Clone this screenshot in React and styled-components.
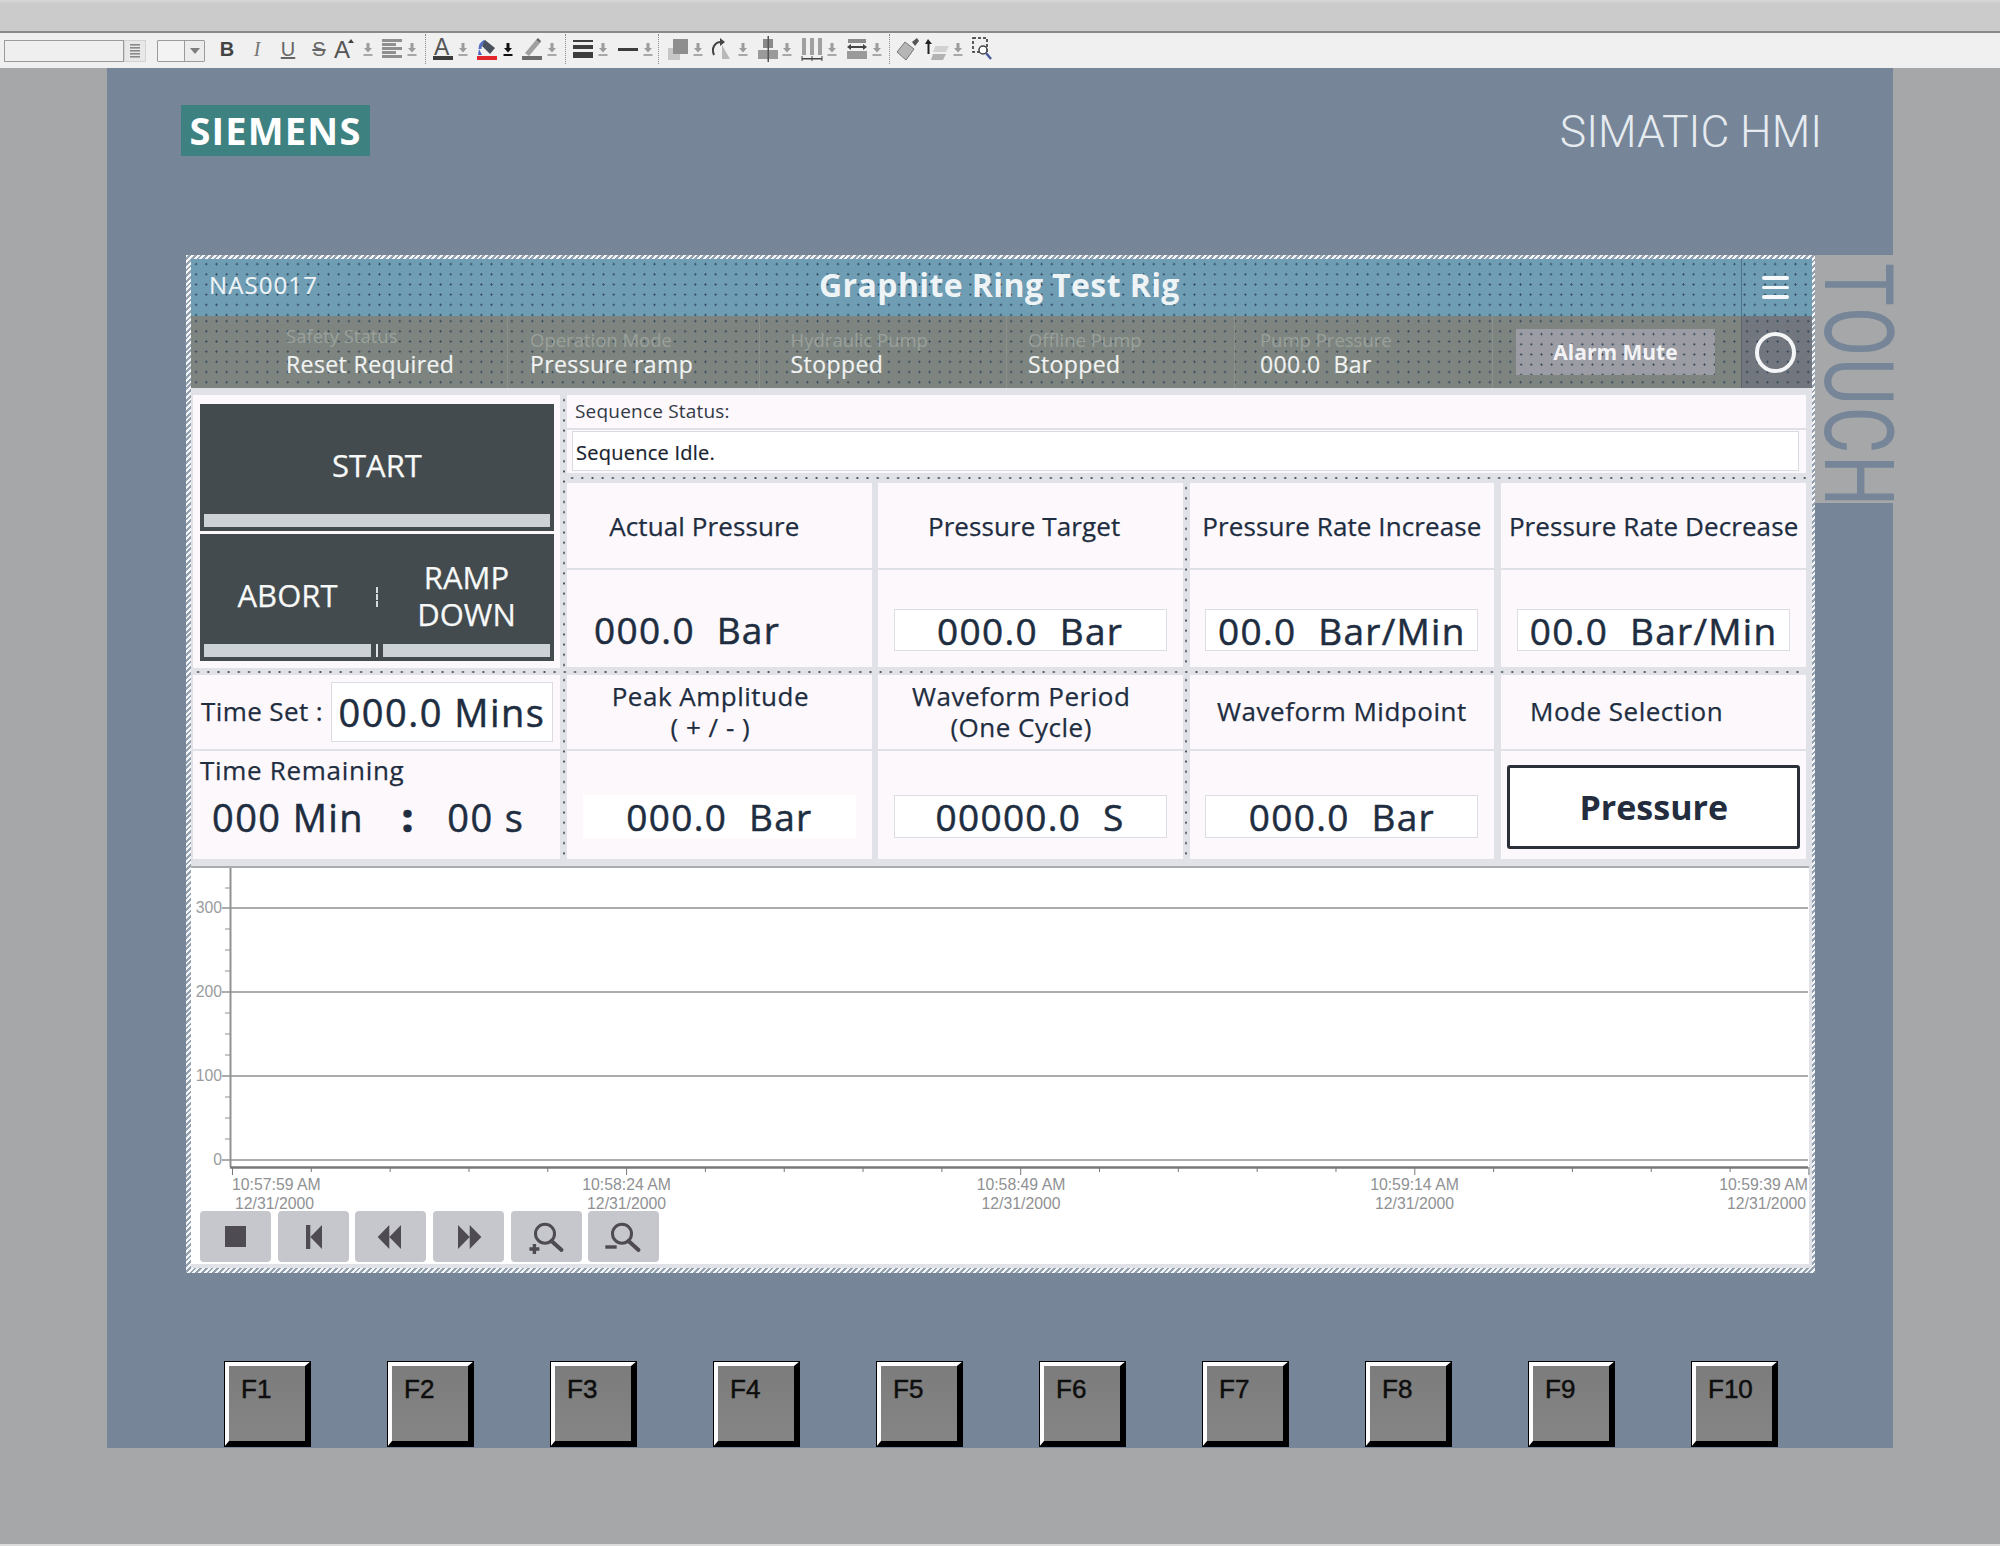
import React from 'react'
import styled, {createGlobalStyle} from 'styled-components'

const SLATE = '#768698'
const PAGE = '#a6a7a9'
const PANEL = '#fcf8fc'
const GUTTER = '#e0e2e7'
const INK = '#1e2d40'

const GlobalStyle = createGlobalStyle`
  html, body {
    margin: 0;
    padding: 0;
    background: ${PAGE};
    font-family: "Open Sans", "Noto Sans", sans-serif;
  }
  * {
    box-sizing: border-box;
  }
`

const Page = styled.div`
  width: 2000px;
  height: 1546px;
  background: ${PAGE};
  display: flex;
  flex-direction: column;
  overflow: hidden;
  border-bottom: 2px solid #dcdcdc;
`

const TopBand = styled.div`
  height: 33px;
  flex: none;
  background: linear-gradient(#d8d8d8 0, #cbcbcb 4px);
  border-bottom: 2px solid #8a8a8a;
`

const Toolbar = styled.div`
  height: 35px;
  flex: none;
  display: flex;
  align-items: center;
  background: #f0f0f0;
  color: #555;
`

const FontBox = styled.div`
  margin-left: 4px;
  width: 120px;
  height: 22px;
  background: #efefef;
  border: 1px solid #9b9b9b;
`

const SpinBox = styled.div`
  width: 22px;
  height: 22px;
  display: flex;
  align-items: center;
  justify-content: center;
  background: #e8e8e8;
  border: 1px solid #d2d2d2;
`

const SizeBox = styled.div`
  margin-left: 11px;
  width: 48px;
  height: 22px;
  display: flex;
  border: 1px solid #9b9b9b;
  border-radius: 1px;
`

const SizeField = styled.div`
  width: 27px;
  background: #f3f3f3;
  border-right: 1px solid #9b9b9b;
`

const SizeArrow = styled.div`
  flex: 1;
  display: flex;
  align-items: center;
  justify-content: center;
  background: #ececec;
  &::after {
    content: '';
    border-left: 5px solid transparent;
    border-right: 5px solid transparent;
    border-top: 6px solid #7d7d7d;
  }
`

const ToolSlot = styled.div`
  flex: none;
  width: ${p => p.$w}px;
  height: 28px;
  margin-top: -3px;
  margin-left: ${p => p.$ml}px;
  display: flex;
  align-items: center;
  justify-content: center;
`

const ToolLetter = styled.span`
  font-family: ${p => (p.$italic ? '"Liberation Serif"' : '"Liberation Sans"')}, sans-serif;
  font-size: 20px;
  line-height: 1;
  color: ${p => p.$color || '#555'};
  font-weight: ${p => (p.$bold ? 700 : 400)};
  font-style: ${p => (p.$italic ? 'italic' : 'normal')};
  text-decoration: ${p => p.$deco || 'none'};
`

const ToolSep = styled.div`
  width: 1px;
  height: 30px;
  border-left: 1px dotted #8b8b8b;
`

const Workspace = styled.div`
  flex: none;
  height: 1380px;
  margin: 0 107px;
  background: ${SLATE};
  display: flex;
  flex-direction: column;
`

const BrandRow = styled.div`
  flex: none;
  height: 88px;
  padding: 37px 71px 0 74px;
  display: flex;
  justify-content: space-between;
`

const Logo = styled.div`
  width: 189px;
  height: 51px;
  padding-bottom: 2px;
  background: #3e8181;
  color: #fff;
  display: flex;
  align-items: center;
  justify-content: center;
  font-size: 38px;
  font-weight: 700;
  letter-spacing: 1.2px;
`

const Product = styled.div`
  height: 51px;
  line-height: 55px;
  font-family: Roboto, "Open Sans", sans-serif;
  font-weight: 300;
  font-size: 44.5px;
  color: #e6ebf0;
`

const ScreenRow = styled.div`
  flex: none;
  margin-top: 99px;
  padding-left: 79px;
  display: flex;
  align-items: flex-start;
`

const Screen = styled.div`
  width: 1629px;
  height: 1018px;
  padding: 4px 3px 5px 5px;
  background: repeating-linear-gradient(135deg, #f4f5f7 0 2px, #94a1b1 2px 4px);
`

const ScreenInner = styled.div`
  height: 100%;
  background: ${GUTTER};
  display: flex;
  flex-direction: column;
`

const TouchBand = styled.div`
  width: 78px;
  height: 248px;
  background: ${PAGE};
  display: flex;
  justify-content: flex-start;
`

const TouchText = styled.div`
  writing-mode: vertical-rl;
  margin: 8px 0 0 -6.5px;
  font-family: Roboto, "Open Sans", sans-serif;
  font-weight: 400;
  font-size: 72px;
  line-height: 72px;
  color: ${SLATE};
  letter-spacing: 1.75px;
  transform: scaleX(1.35);
  transform-origin: left top;
`

const dots = 'radial-gradient(circle, #2c4254 0.8px, transparent 1.2px)'

const Header = styled.div`
  flex: none;
  height: 57px;
  display: flex;
  align-items: center;
  background: ${dots} 0 0 / 10.2px 10.2px, #6e9db4;
  color: #eef3f6;
`

const StationName = styled.div`
  width: 628px;
  padding: 0 0 6px 18px;
  font-size: 24px;
  letter-spacing: 1.1px;
  -webkit-text-stroke: 0.15px #eef3f6;
`

const Title = styled.div`
  flex: 1;
  padding-bottom: 6px;
  font-size: 32px;
  font-weight: 700;
  letter-spacing: 0.4px;
`

const MenuCell = styled.div`
  width: 71px;
  height: 100%;
  padding-right: 3px;
  display: flex;
  flex-direction: column;
  align-items: center;
  justify-content: center;
  gap: 6px;
  border-left: 1px solid #4f7288;
`

const MenuBar = styled.span`
  width: 27px;
  height: 3.5px;
  border-radius: 2px;
  background: #f6f9fb;
`

const StatusBar = styled.div`
  flex: none;
  height: 72px;
  display: flex;
  background: ${dots} 0 0 / 10.2px 10.2px, #7e8580;
  color: #f1f3f2;
`

const StatusCell = styled.div`
  width: ${p => p.$w}px;
  padding: 12px 0 0 ${p => p.$pl}px;
  border-left: ${p => (p.$line ? '1px solid #8b928d' : 'none')};
`

const StatusLabel = styled.div`
  height: 24px;
  line-height: 24px;
  font-size: 18.5px;
  color: #9aa19c;
  transform: translateY(${p => (p.$raised ? -4 : 0)}px);
`

const StatusValue = styled.div`
  height: 28px;
  line-height: 25px;
  font-size: 23px;
  font-weight: 500;
  letter-spacing: 0.4px;
  white-space: pre;
  -webkit-text-stroke: 0.2px #f1f3f2;
`

const AlarmCell = styled.div`
  width: 249px;
  padding-left: 23px;
  display: flex;
  align-items: center;
  border-left: 1px solid #8b928d;
`

const AlarmButton = styled.div`
  width: 199px;
  height: 46px;
  display: flex;
  align-items: center;
  justify-content: center;
  background: ${dots} 0 0 / 10.2px 10.2px, #9b9ca4;
  font-size: 21px;
  font-weight: 700;
  color: #f3f3f5;
`

const LampCell = styled.div`
  width: 71px;
  padding-right: 2px;
  display: flex;
  align-items: center;
  justify-content: center;
  background: ${dots} 0 0 / 10.2px 10.2px, #71767f;
  border-left: 1px solid #5f646c;
`

const Lamp = styled.div`
  width: 41px;
  height: 41px;
  border: 4px solid #f4f5f7;
  border-radius: 50%;
`

const Content = styled.div`
  flex: none;
  padding: 7px 6px 0 2px;
  display: flex;
  flex-direction: column;
`

const Row = styled.div`
  display: flex;
`

const VGap = styled.div`
  flex: none;
  width: ${p => p.$w}px;
  background: ${p => (p.$dotted ? 'radial-gradient(circle, #4a505a 0.9px, transparent 1.2px) center top / 4px 10.2px repeat-y' : 'none')};
`

const HGap = styled.div`
  flex: none;
  height: ${p => p.$h}px;
  background: radial-gradient(circle, #4a505a 0.9px, transparent 1.2px) left center / 10.2px 4px repeat-x;
`

const ControlPanel = styled.div`
  flex: none;
  width: 367px;
  height: 273px;
  padding: 9px 6px 7px 7px;
  background: ${PANEL};
  display: flex;
  flex-direction: column;
  gap: 3px;
`

const CommandButton = styled.div`
  flex: 1;
  padding: 0 4px 4px;
  background: #434b4f;
  display: flex;
  flex-direction: column;
`

const CommandSplit = styled.div`
  flex: 1;
  display: flex;
`

const CommandPart = styled.div`
  flex: 1;
  display: flex;
  flex-direction: column;
`

const CommandDivider = styled.div`
  flex: none;
  width: 2px;
  margin: 0 5px;
  padding-top: 53px;
  display: flex;
  flex-direction: column;
  justify-content: space-between;
  &::before {
    content: '';
    display: block;
    height: 20px;
    border-left: 2px dashed #d5dadd;
  }
  &::after {
    content: '';
    display: block;
    height: 13px;
    background: #dfe3e6;
  }
`

const CommandText = styled.div`
  flex: 1;
  display: flex;
  align-items: center;
  justify-content: center;
  text-align: center;
  font-size: 31px;
  font-weight: 500;
  line-height: 37px;
  color: #f7f8f8;
  padding-top: ${p => p.$pt || 0}px;
  -webkit-text-stroke: 0.25px #f7f8f8;
`

const CommandBar = styled.div`
  flex: none;
  height: 13px;
  background: #ccd2d6;
`

const RightColumn = styled.div`
  flex: 1;
  display: flex;
  flex-direction: column;
`

const SequenceBlock = styled.div`
  flex: none;
  height: 78px;
  background: ${PANEL};
  display: flex;
  flex-direction: column;
`

const SequenceLabel = styled.div`
  height: 35px;
  line-height: 33px;
  padding-left: 8px;
  font-size: 19px;
  letter-spacing: 0.2px;
  color: #333a44;
  border-bottom: 2px solid #dfe0e5;
`

const SequenceField = styled.div`
  height: 40px;
  margin: 1px 7px 0 5px;
  padding-left: 3px;
  line-height: 41px;
  font-size: 20px;
  font-weight: 500;
  letter-spacing: 0.25px;
  color: #18222e;
  background: #fff;
  border: 1px solid #dadbe0;
  -webkit-text-stroke: 0.2px #18222e;
`

const Card = styled.div`
  flex: 1;
  height: 184px;
  background: ${PANEL};
  display: flex;
  flex-direction: column;
`

const CardHead = styled.div`
  flex: none;
  height: ${p => p.$h}px;
  padding: ${p => p.$sink || 0}px ${p => p.$shift || 0}px ${p => p.$lift || 0}px 0;
  display: flex;
  align-items: center;
  justify-content: center;
  text-align: center;
  font-size: 26px;
  font-weight: 500;
  line-height: 31px;
  letter-spacing: ${p => (p.$wide ? 0.5 : 0.1)}px;
  color: ${INK};
  border-bottom: 2px solid #e0e1e6;
  box-sizing: content-box;
  -webkit-text-stroke: 0.25px ${INK};
`

const CardBody = styled.div`
  flex: 1;
  padding-top: ${p => p.$top}px;
`

const ValueBox = styled.div`
  width: 273px;
  height: ${p => p.$h || 42}px;
  margin: 0 auto;
  display: flex;
  align-items: center;
  justify-content: center;
  white-space: pre;
  background: #fff;
  border: ${p => (p.$plain ? 'none' : '1px solid #dcdde2')};
  font-size: 37px;
  font-weight: 500;
  letter-spacing: 1.3px;
  color: ${INK};
  -webkit-text-stroke: 0.5px ${INK};
`

const BareValue = styled.div`
  height: 42px;
  line-height: 42px;
  padding-left: 27px;
  white-space: pre;
  font-size: 37px;
  font-weight: 500;
  letter-spacing: 1.3px;
  color: ${INK};
  -webkit-text-stroke: 0.5px ${INK};
`

const ModeButton = styled.div`
  width: 293px;
  height: 84px;
  margin: 0 0 0 6px;
  display: flex;
  align-items: center;
  justify-content: center;
  background: #fff;
  border: 3px solid #2a2f38;
  border-radius: 3px;
  font-size: 34px;
  font-weight: 700;
  color: #232d3e;
`

const TimePanel = styled.div`
  flex: none;
  width: 367px;
  height: 184px;
  background: ${PANEL};
  display: flex;
  flex-direction: column;
`

const TimeSetRow = styled.div`
  flex: none;
  height: 76px;
  padding: 0 7px 0 8px;
  display: flex;
  align-items: center;
  justify-content: space-between;
  border-bottom: 2px solid #e0e1e6;
  font-size: 26px;
  font-weight: 500;
  letter-spacing: 0.4px;
  color: ${INK};
  -webkit-text-stroke: 0.25px ${INK};
`

const TimeSetLabel = styled.span`
  padding-bottom: 3px;
`

const TimeField = styled.div`
  width: 222px;
  height: 60px;
  display: flex;
  align-items: center;
  justify-content: center;
  background: #fff;
  border: 1px solid #dcdde2;
  font-size: 38px;
  font-weight: 500;
  letter-spacing: 1.5px;
  color: ${INK};
  -webkit-text-stroke: 0.5px ${INK};
`

const TimeLabel = styled.div`
  padding: 5px 0 0 7px;
  line-height: 28px;
  font-size: 26px;
  font-weight: 500;
  letter-spacing: 0.7px;
  color: ${INK};
  -webkit-text-stroke: 0.25px ${INK};
`

const TimeValues = styled.div`
  margin-top: 10px;
  padding-left: 19px;
  display: flex;
  font-size: 38px;
  font-weight: 500;
  line-height: 46px;
  letter-spacing: 1.4px;
  color: ${INK};
  -webkit-text-stroke: 0.5px ${INK};
`

const TimePiece = styled.span`
  margin-left: ${p => p.$ml || 0}px;
  font-weight: ${p => (p.$bold ? 800 : 500)};
`

const ChartArea = styled.div`
  flex: none;
  margin: 7px -3px 0 -2px;
  height: 398px;
  background: #fff;
  border-top: 2px solid #a9abae;
  display: flex;
  flex-direction: column;
`

const ChartSvg = styled.svg`
  display: block;
  flex: none;
  overflow: visible;
`

const NavRow = styled.div`
  flex: none;
  margin-top: 1px;
  padding-left: 9px;
  display: flex;
  gap: 6.7px;
`

const NavButton = styled.div`
  width: 71px;
  height: 51px;
  background: #c6c7cc;
  border-radius: 4px;
  color: #4e4c52;
`

const KeyRow = styled.div`
  flex: none;
  margin-top: 88px;
  padding-left: 117px;
  display: flex;
  gap: 76px;
`

const FKey = styled.div`
  flex: none;
  width: 87px;
  height: 86px;
  padding: 8px 0 0 12px;
  background: linear-gradient(#7c7c7c, #858585);
  border-style: solid;
  border-width: 5px 6px 6px 5px;
  border-color: #fdfdfd #000 #000 #fdfdfd;
  outline: 1px solid #000;
  outline-offset: -1px;
  font-family: "Liberation Sans", sans-serif;
  font-size: 26px;
  line-height: 30px;
  color: #0e0e0e;
  -webkit-text-stroke: 0.5px #0e0e0e;
`

// toolbar icons, drawn at their size in the picture
const Arrow = ({dark}) => (
  <svg width="10" height="15" viewBox="0 0 10 15">
    <path d="M3.5 1h3v5H9L5 10.5 1 6h2.5z" fill={dark ? '#111' : '#9c9c9c'}/>
    <rect x="0.5" y="12" width="9" height="2" fill={dark ? '#111' : '#a8a8a8'}/>
  </svg>
)

const ListGlyph = () => (
  <svg width="12" height="16" viewBox="0 0 12 16">
    {[1, 4, 7, 10, 13].map(y => <rect key={y} x="1" y={y} width="10" height="1.6" fill="#8a8a8a"/>)}
  </svg>
)

const FontGrow = () => (
  <svg width="24" height="26" viewBox="0 0 24 26">
    <text x="1" y="22" fontFamily="Liberation Sans" fontSize="24" fill="#555">A</text>
    <path d="M15 7l3-4 3 4z" fill="#444"/>
  </svg>
)

const AlignIcon = () => (
  <svg width="22" height="22" viewBox="0 0 22 22">
    {[[1, 20], [5, 14], [9, 20], [13, 14], [17, 20]].map(([y, w]) => (
      <rect key={y} x="1" y={y} width={w} height="3" fill="#8f8f8f"/>
    ))}
  </svg>
)

const TextColor = () => (
  <svg width="22" height="28" viewBox="0 0 22 28">
    <text x="2" y="20" fontFamily="Liberation Sans" fontSize="23" fill="#555">A</text>
    <rect x="1" y="21" width="20" height="4" fill="#3b3b3b"/>
  </svg>
)

const FillColor = () => (
  <svg width="22" height="28" viewBox="0 0 22 28">
    <path d="M4 14c0-5 3-7 5-8" fill="none" stroke="#5470c4" strokeWidth="3"/>
    <path d="M9 5l10 8-5 6-8-8z" fill="#49505e"/>
    <path d="M3 14l3 6h-4z" fill="#4c63c0"/>
    <rect x="1" y="21" width="20" height="4" fill="#e3262b"/>
  </svg>
)

const PenColor = () => (
  <svg width="22" height="28" viewBox="0 0 22 28">
    <path d="M4 18L15 5l4 3L8 21z" fill="#a0a0a0"/>
    <path d="M15 5l2-2 3 3-1 2z" fill="#666"/>
    <rect x="1" y="21" width="20" height="4" fill="#6c6c6c"/>
  </svg>
)

const LineWidth = () => (
  <svg width="20" height="22" viewBox="0 0 20 22">
    <rect x="0" y="2" width="20" height="2" fill="#3d3d3d"/>
    <rect x="0" y="7" width="20" height="4" fill="#3d3d3d"/>
    <rect x="0" y="14" width="20" height="6" fill="#3d3d3d"/>
  </svg>
)

const LineStyle = () => (
  <svg width="20" height="22" viewBox="0 0 20 22">
    <rect x="0" y="10" width="20" height="3" fill="#3d3d3d"/>
  </svg>
)

const Layers = () => (
  <svg width="24" height="26" viewBox="0 0 24 26">
    <rect x="1" y="12" width="12" height="12" fill="#c6c6c6"/>
    <rect x="6" y="3" width="15" height="15" fill="#8e8e8e"/>
  </svg>
)

const Rotate = () => (
  <svg width="24" height="26" viewBox="0 0 24 26">
    <path d="M12 23L20 23 12 9z" fill="#b9b9b9"/>
    <path d="M4 19c-3-7 1-13 7-13" fill="none" stroke="#444" strokeWidth="2"/>
    <path d="M10 2l5 4-5 4z" fill="#444"/>
  </svg>
)

const AlignObjects = () => (
  <svg width="22" height="26" viewBox="0 0 22 26">
    <rect x="6" y="3" width="10" height="9" fill="#8a8a8a"/>
    <rect x="1" y="14" width="20" height="9" fill="#9a9a9a"/>
    <rect x="10.500" y="0" width="1.500" height="26" fill="#555"/>
  </svg>
)

const Distribute = () => (
  <svg width="22" height="26" viewBox="0 0 22 26">
    {[1, 9, 17].map(x => <rect key={x} x={x} y="2" width="4" height="17" fill="#a0a0a0"/>)}
    <rect x="1" y="22" width="20" height="1.5" fill="#444"/>
    <path d="M1 20v5M21 20v5M11 20v5" stroke="#444"/>
  </svg>
)

const Spacing = () => (
  <svg width="22" height="26" viewBox="0 0 22 26">
    <rect x="2" y="3" width="18" height="4" fill="#8a8a8a"/>
    <path d="M1 11l4-3v6zM21 11l-4-3v6z" fill="#444"/>
    <rect x="5" y="10" width="12" height="2" fill="#444"/>
    <rect x="1" y="15" width="20" height="8" fill="#9a9a9a"/>
  </svg>
)

const Brush = () => (
  <svg width="24" height="26" viewBox="0 0 24 26">
    <path d="M16 6l5-4 2 3-4 5z" fill="#555"/>
    <path d="M9 6l9 7-8 11-9-8z" fill="#b6b6b6" stroke="#777"/>
  </svg>
)

const RaiseLayer = () => (
  <svg width="26" height="26" viewBox="0 0 26 26">
    <path d="M3 3l4 5H4.500v10h-2V8H0z" fill="#222"/>
    <path d="M10 10h14l-3 6H8z" fill="#d2d2d2"/>
    <path d="M8 18h13l-3 6H6z" fill="#b2b2b2"/>
  </svg>
)

const ZoomBox = () => (
  <svg width="24" height="26" viewBox="0 0 24 26">
    <rect x="2" y="2" width="14" height="14" fill="none" stroke="#2a2a2a" strokeWidth="1.5" strokeDasharray="3 2"/>
    <circle cx="12" cy="14" r="4" fill="#fff" stroke="#444" strokeWidth="1.5"/>
    <path d="M15 17l5 6" stroke="#4a5a9a" strokeWidth="2.500"/>
  </svg>
)

const Separator = () => <ToolSep/>

// [element, width, centre x in the toolbar]
const toolDefs = [
  [<ToolLetter $bold $color="#444">B</ToolLetter>, 14, 227],
  [<ToolLetter $italic $color="#777">I</ToolLetter>, 8, 257],
  [<ToolLetter $deco="underline" $color="#666">U</ToolLetter>, 14, 288],
  [<ToolLetter $deco="line-through" $color="#666">S</ToolLetter>, 14, 319],
  [<FontGrow/>, 24, 345],
  [<Arrow/>, 10, 368],
  [<AlignIcon/>, 22, 392],
  [<Arrow/>, 10, 412],
  [<Separator/>, 1, 425],
  [<TextColor/>, 22, 443],
  [<Arrow/>, 10, 463],
  [<FillColor/>, 22, 487],
  [<Arrow dark/>, 10, 508],
  [<PenColor/>, 22, 532],
  [<Arrow/>, 10, 552],
  [<Separator/>, 1, 565],
  [<LineWidth/>, 20, 583],
  [<Arrow/>, 10, 603],
  [<LineStyle/>, 20, 628],
  [<Arrow/>, 10, 648],
  [<Separator/>, 1, 658],
  [<Layers/>, 24, 679],
  [<Arrow/>, 10, 698],
  [<Rotate/>, 24, 722],
  [<Arrow/>, 10, 743],
  [<AlignObjects/>, 22, 768],
  [<Arrow/>, 10, 787],
  [<Distribute/>, 22, 812],
  [<Arrow/>, 10, 832],
  [<Spacing/>, 22, 857],
  [<Arrow/>, 10, 877],
  [<Separator/>, 1, 889],
  [<Brush/>, 24, 908],
  [<RaiseLayer/>, 26, 938],
  [<Arrow/>, 10, 958],
  [<ZoomBox/>, 24, 983],
]

const tools = toolDefs.reduce((acc, [node, w, c]) => {
  const left = c - w / 2
  acc.list.push({node, w, ml: left - acc.right})
  acc.right = left + w
  return acc
}, {list: [], right: 205}).list

const TopToolbar = () => (
  <Toolbar>
    <FontBox/>
    <SpinBox><ListGlyph/></SpinBox>
    <SizeBox><SizeField/><SizeArrow/></SizeBox>
    {tools.map((t, i) => <ToolSlot key={i} $w={t.w} $ml={t.ml}>{t.node}</ToolSlot>)}
  </Toolbar>
)

const xTicks = Array.from({length: 21}, (_, i) => 41.5 + i * 78.82)
const yMinor = [20, 61, 82, 103, 145, 166, 187, 229, 250, 271]
const gridLines = [[40, '300'], [124, '200'], [208, '100'], [292, '0']]
const xLabels = [
  {x: 41, anchor: 'start', time: '10:57:59 AM', dx: 3},
  {x: 435.6, anchor: 'middle', time: '10:58:24 AM', dx: 0},
  {x: 830, anchor: 'middle', time: '10:58:49 AM', dx: 0},
  {x: 1223.5, anchor: 'middle', time: '10:59:14 AM', dx: 0},
  {x: 1617, anchor: 'end', time: '10:59:39 AM', dx: -2},
]

const labelFont = {fontFamily: 'Liberation Sans', fontSize: 15.800, fill: '#8f9193'}

const TrendChart = () => (
  <ChartSvg width="1621" height="342" viewBox="0 0 1621 342">
    <line x1="39.500" y1="0" x2="39.500" y2="299" stroke="#909193" strokeWidth="2"/>
    {gridLines.map(([y, label]) => (
      <g key={label}>
        <line x1="31" y1={y} x2="1617" y2={y} stroke="#8f9091" strokeWidth="1.6"/>
        <text x="31" y={y + 5} textAnchor="end" {...labelFont} fill="#9a9c9e">{label}</text>
      </g>
    ))}
    {yMinor.map(y => <line key={y} x1="34" y1={y} x2="39" y2={y} stroke="#8f9091"/>)}
    <line x1="39" y1="299.500" x2="1617" y2="299.500" stroke="#77787a" strokeWidth="2.400"/>
    {xTicks.map((x, i) => (
      <line key={i} x1={x} y1="299" x2={x} y2={i % 5 === 0 ? 307 : 304} stroke="#77787a"/>
    ))}
    {xLabels.map(l => (
      <g key={l.time} textAnchor={l.anchor}>
        <text x={l.x} y="322" {...labelFont}>{l.time}</text>
        <text x={l.x + l.dx} y="340.500" {...labelFont}>12/31/2000</text>
      </g>
    ))}
  </ChartSvg>
)

const NavIcon = ({children}) => (
  <svg width="71" height="51" viewBox="0 0 71 51" fill="currentColor">{children}</svg>
)

const navIcons = [
  <rect x="25" y="15" width="21" height="21"/>,
  <><rect x="28" y="14" width="4.300" height="24"/><path d="M44 14v24L32.300 26z"/></>,
  <path d="M34.300 14v24L22.700 26zM46 14v24L34.300 26z"/>,
  <path d="M25 14v24l11.700-12zM36.700 14v24l11.700-12z"/>,
  <>
    <circle cx="34" cy="22.700" r="9.500" fill="none" stroke="currentColor" strokeWidth="3"/>
    <path d="M40.500 30l10 9" stroke="currentColor" strokeWidth="4" strokeLinecap="round"/>
    <path d="M21.700 33h3.400v3.300h3.300v3.400h-3.300V43h-3.400v-3.300h-3.300v-3.400h3.300z"/>
  </>,
  <>
    <circle cx="34" cy="22.700" r="9.500" fill="none" stroke="currentColor" strokeWidth="3"/>
    <path d="M40.500 30l10 9" stroke="currentColor" strokeWidth="4" strokeLinecap="round"/>
    <rect x="17.300" y="34.300" width="11.400" height="3.400"/>
  </>,
]

const statusCells = [
  {w: 316, pl: 95, label: 'Safety Status', value: 'Reset Required', raised: true},
  {w: 251.6, pl: 22, label: 'Operation Mode', value: 'Pressure ramp', line: true},
  {w: 247.4, pl: 31, label: 'Hydraulic Pump', value: 'Stopped', line: true},
  {w: 228, pl: 21, label: 'Offline Pump', value: 'Stopped', line: true},
  {w: 258, pl: 25, label: 'Pump Pressure', value: '000.0  Bar', line: true},
]

const fKeys = ['F1', 'F2', 'F3', 'F4', 'F5', 'F6', 'F7', 'F8', 'F9', 'F10']

const App = () => {
  return (
    <Page>
      <GlobalStyle/>
      <TopBand/>
      <TopToolbar/>
      <Workspace>
        <BrandRow>
          <Logo>SIEMENS</Logo>
          <Product>SIMATIC HMI</Product>
        </BrandRow>
        <ScreenRow>
          <Screen>
            <ScreenInner>
              <Header>
                <StationName>NAS0017</StationName>
                <Title>Graphite Ring Test Rig</Title>
                <MenuCell><MenuBar/><MenuBar/><MenuBar/></MenuCell>
              </Header>
              <StatusBar>
                {statusCells.map(c => (
                  <StatusCell key={c.label} $w={c.w} $pl={c.pl} $line={c.line}>
                    <StatusLabel $raised={c.raised}>{c.label}</StatusLabel>
                    <StatusValue>{c.value}</StatusValue>
                  </StatusCell>
                ))}
                <AlarmCell><AlarmButton>Alarm Mute</AlarmButton></AlarmCell>
                <LampCell><Lamp/></LampCell>
              </StatusBar>
              <Content>
                <Row>
                  <ControlPanel>
                    <CommandButton>
                      <CommandText $pt={12}>START</CommandText>
                      <CommandBar/>
                    </CommandButton>
                    <CommandButton>
                      <CommandSplit>
                        <CommandPart>
                          <CommandText $pt={12}>ABORT</CommandText>
                          <CommandBar/>
                        </CommandPart>
                        <CommandDivider/>
                        <CommandPart>
                          <CommandText $pt={13}>RAMP<br/>DOWN</CommandText>
                          <CommandBar/>
                        </CommandPart>
                      </CommandSplit>
                    </CommandButton>
                  </ControlPanel>
                  <VGap $w={7} $dotted/>
                  <RightColumn>
                    <SequenceBlock>
                      <SequenceLabel>Sequence Status:</SequenceLabel>
                      <SequenceField>Sequence Idle.</SequenceField>
                    </SequenceBlock>
                    <HGap $h={10}/>
                    <Row>
                      <Card>
                        <CardHead $h={83} $sink={2} $shift={30}>Actual Pressure</CardHead>
                        <CardBody $top={39}><BareValue>000.0  Bar</BareValue></CardBody>
                      </Card>
                      <VGap $w={6}/>
                      <Card>
                        <CardHead $h={83} $sink={2} $shift={12}>Pressure Target</CardHead>
                        <CardBody $top={39}><ValueBox>000.0  Bar</ValueBox></CardBody>
                      </Card>
                      <VGap $w={7} $dotted/>
                      <Card>
                        <CardHead $h={83} $sink={2}>Pressure Rate Increase</CardHead>
                        <CardBody $top={39}><ValueBox>00.0  Bar/Min</ValueBox></CardBody>
                      </Card>
                      <VGap $w={7}/>
                      <Card>
                        <CardHead $h={83} $sink={2}>Pressure Rate Decrease</CardHead>
                        <CardBody $top={39}><ValueBox>00.0  Bar/Min</ValueBox></CardBody>
                      </Card>
                    </Row>
                  </RightColumn>
                </Row>
                <HGap $h={7}/>
                <Row>
                  <TimePanel>
                    <TimeSetRow>
                      <TimeSetLabel>Time Set :</TimeSetLabel>
                      <TimeField>000.0 Mins</TimeField>
                    </TimeSetRow>
                    <TimeLabel>Time Remaining</TimeLabel>
                    <TimeValues>
                      <TimePiece>000 Min</TimePiece>
                      <TimePiece $ml={38} $bold>:</TimePiece>
                      <TimePiece $ml={33}>00 s</TimePiece>
                    </TimeValues>
                  </TimePanel>
                  <VGap $w={7} $dotted/>
                  <Card>
                    <CardHead $h={74} $shift={18} $wide>Peak Amplitude<br/>( + / - )</CardHead>
                    <CardBody $top={44}><ValueBox $plain $h={43}>000.0  Bar</ValueBox></CardBody>
                  </Card>
                  <VGap $w={6}/>
                  <Card>
                    <CardHead $h={74} $shift={18} $wide>Waveform Period<br/>(One Cycle)</CardHead>
                    <CardBody $top={44}><ValueBox $h={43}>00000.0  S</ValueBox></CardBody>
                  </Card>
                  <VGap $w={7} $dotted/>
                  <Card>
                    <CardHead $h={72} $lift={2} $wide>Waveform Midpoint</CardHead>
                    <CardBody $top={44}><ValueBox $h={43}>000.0  Bar</ValueBox></CardBody>
                  </Card>
                  <VGap $w={7}/>
                  <Card>
                    <CardHead $h={72} $lift={2} $shift={54} $wide>Mode Selection</CardHead>
                    <CardBody $top={14}><ModeButton>Pressure</ModeButton></CardBody>
                  </Card>
                </Row>
                <ChartArea>
                  <TrendChart/>
                  <NavRow>
                    {navIcons.map((icon, i) => (
                      <NavButton key={i}><NavIcon>{icon}</NavIcon></NavButton>
                    ))}
                  </NavRow>
                </ChartArea>
              </Content>
            </ScreenInner>
          </Screen>
          <TouchBand><TouchText>TOUCH</TouchText></TouchBand>
        </ScreenRow>
        <KeyRow>
          {fKeys.map(k => <FKey key={k}>{k}</FKey>)}
        </KeyRow>
      </Workspace>
    </Page>
  )
}

export default App
